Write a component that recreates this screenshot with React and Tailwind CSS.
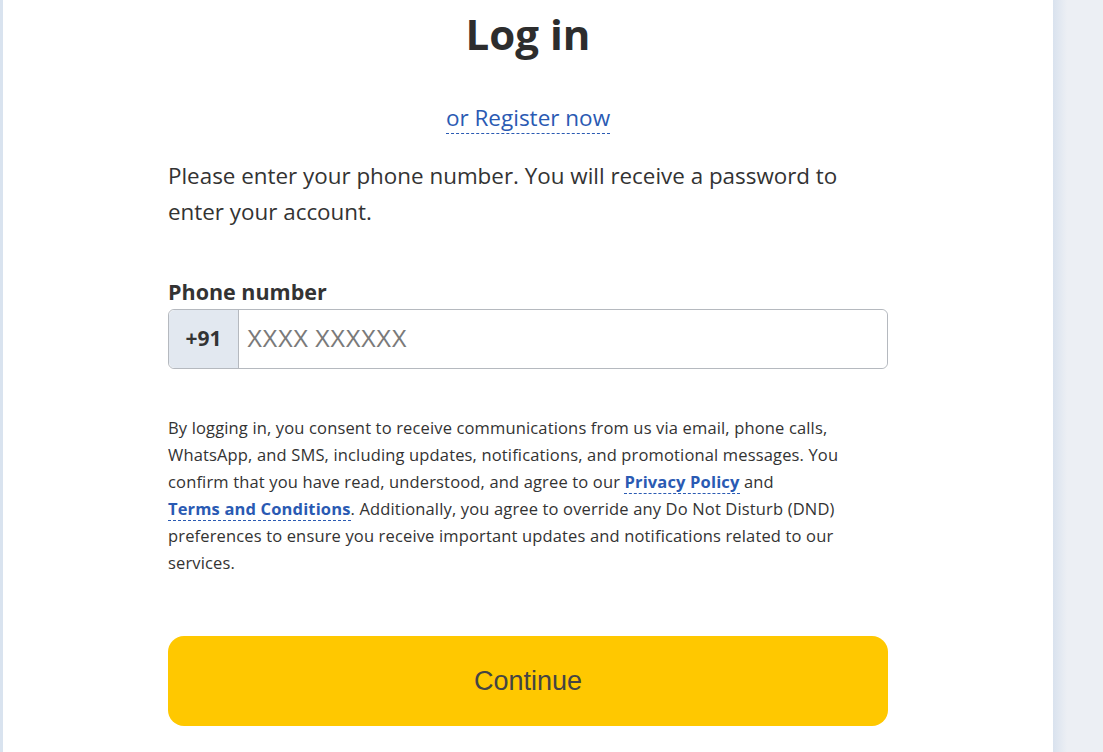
import React from 'react';

export default function App() {
  return (
    <div className="flex h-[752px] w-full overflow-hidden bg-[#eceff4]" style={{ fontFamily: '"Open Sans", Lato, sans-serif' }}>
      <div className="w-[3px] shrink-0 bg-[#d9e3ef]" />
      <main className="w-[1050px] shrink-0 bg-white">
        <div className="mx-auto w-[720px] text-[#333]">
          <h1 className="mt-[8px] text-center text-[42px] font-bold leading-[52px] text-[#2d2d2d]">Log in</h1>

          <div className="mt-[44px] text-center">
            <a href="#" className="border-b border-dashed border-[#2a5ab3] text-[22.5px] leading-[28px] text-[#2a5ab3]">
              or Register now
            </a>
          </div>

          <p className="mt-[26px] text-[22.4px] leading-[36px]">
            Please enter your phone number. You will receive a password to enter your account.
          </p>

          <label className="mt-[48px] block text-[21.5px] font-bold leading-[28px]">Phone number</label>
          <div className="mt-[3px] flex h-[60px] rounded-[6px] border border-[#b5b9bf]">
            <div className="flex w-[70px] items-center justify-center rounded-l-[6px] border-r border-[#b5b9bf] bg-[#e2e8f0] text-[21px] font-bold">
              +91
            </div>
            <input
              type="tel"
              placeholder="XXXX XXXXXX"
              className="min-w-0 flex-1 rounded-r-[6px] bg-white px-[8px] text-[23px] text-[#333] outline-none placeholder:text-[#7a7a7a]"
              style={{ fontFamily: '"Liberation Sans", Arial, sans-serif' }}
            />
          </div>

          <p className="mt-[45px] text-[16.5px] leading-[27px] tracking-[0.15px] text-[#333]">
            By logging in, you consent to receive communications from us via email, phone calls, WhatsApp, and SMS,
            including updates, notifications, and promotional messages. You confirm that you have read, understood, and
            agree to our{' '}
            <a href="#" className="whitespace-nowrap border-b border-dashed border-[#2a5ab3] font-bold text-[#2a5ab3]">Privacy Policy</a> and{' '}
            <a href="#" className="whitespace-nowrap border-b border-dashed border-[#2a5ab3] font-bold text-[#2a5ab3]">Terms and Conditions</a>.
            Additionally, you agree to override any Do Not Disturb (DND) preferences to ensure you receive important
            updates and notifications related to our services.
          </p>

          <button
            className="mt-[60px] flex h-[90px] w-full items-center justify-center rounded-[16px] bg-[#ffc800] text-[27px] text-[#444]"
            style={{ fontFamily: '"Liberation Sans", Arial, sans-serif' }}
          >
            Continue
          </button>
        </div>
      </main>
      <div className="w-[14px] shrink-0 bg-gradient-to-r from-[#d9e2ee] to-[#eceff4]" />
    </div>
  );
}
